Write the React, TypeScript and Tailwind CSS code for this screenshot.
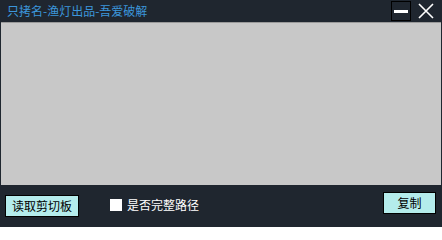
import { useState } from "react";

export default function App() {
    const [fullPath, setFullPath] = useState(false);
    const [text, setText] = useState('');

    return (
        <div className="w-[442px] h-[227px] bg-[#1f262f] flex flex-col select-none"
            style={{ fontFamily: '"Noto Sans CJK SC", "Liberation Sans", sans-serif' }}>
            {/* title bar */}
            <div className="h-[22px] flex flex-row items-start">
                <div className="flex-1 pl-[7px] pt-[3px] text-[12px] leading-[16px] text-[#3c96dc]">只拷名-渔灯出品-吾爱破解</div>
                <button className="mt-[1px] w-[20px] h-[20px] border border-black flex items-center justify-center">
                    <span className="block w-[14px] h-[3px] bg-white" />
                </button>
                <button className="ml-[6px] mr-[7px] mt-[2px] w-[18px] h-[18px] flex items-center justify-center">
                    <svg width="16" height="16" viewBox="0 0 16 16">
                        <path d="M1 1 L15 15 M15 1 L1 15" stroke="white" strokeWidth="1.6" />
                    </svg>
                </button>
            </div>

            {/* text area */}
            <textarea
                value={text}
                onChange={(e) => setText(e.target.value)}
                className="mx-[1px] h-[163px] bg-[#c8c8c8] border-t border-[#9a9a9a] resize-none outline-none text-[12px] p-1"
            />

            {/* bottom bar */}
            <div className="flex-1 flex flex-row items-start pl-[5px] pr-[6px]">
                <button className="mt-[10px] w-[74px] h-[22px] bg-[#b4ecec] border border-black text-[12px] leading-[20px] text-black">读取剪切板</button>
                <label className="ml-[31px] mt-[13px] flex flex-row items-center gap-[5px] text-[12px] leading-[14px] text-white">
                    <span
                        onClick={() => setFullPath(!fullPath)}
                        className="block w-[12px] h-[12px] bg-white text-black text-[10px] leading-[12px] text-center">{fullPath ? '✓' : ''}</span>
                    是否完整路径
                </label>
                <div className="flex-1" />
                <button className="mt-[7px] w-[53px] h-[22px] bg-[#b4ecec] border border-black text-[12px] leading-[20px] text-black">复制</button>
            </div>
        </div>
    )
}
